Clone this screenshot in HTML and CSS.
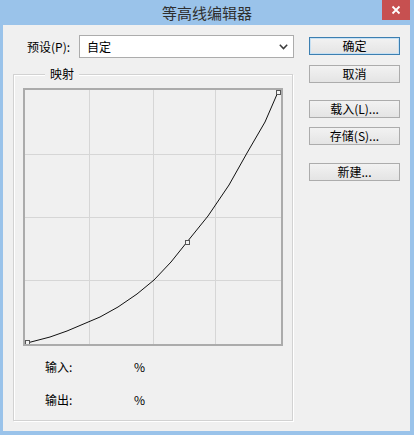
FILE: index.html
```html
<!DOCTYPE html>
<html lang="zh-CN">
<head>
<meta charset="utf-8">
<title>等高线编辑器</title>
<link rel="stylesheet" href="styles.css">
</head>
<body>
<div class="window">
  <div class="titlebar">
    <span class="title">等高线编辑器</span>
    <span class="close">
      <svg width="10" height="10" viewBox="0 0 10 10"><path d="M1.5 1.5 L8.5 8.5 M8.5 1.5 L1.5 8.5" stroke="#fff" stroke-width="1.8" fill="none"/></svg>
    </span>
  </div>
  <div class="client">
    <div class="left">
      <div class="preset">
        <span class="preset-label">预设(P):</span>
        <div class="select">
          <span class="select-value">自定</span>
          <svg class="chev" width="9" height="6" viewBox="0 0 9 6"><path d="M0.8 0.8 L4.5 4.6 L8.2 0.8" stroke="#3c3c3c" stroke-width="1.5" fill="none"/></svg>
        </div>
      </div>
      <div class="group">
        <div class="legend-row"><span class="legend">映射</span></div>
        <div class="graph">
          <svg width="256" height="254" viewBox="0 0 256 254">
            <g stroke="#d6d6d6" stroke-width="1">
              <line x1="64.5" y1="0" x2="64.5" y2="254"/>
              <line x1="128.5" y1="0" x2="128.5" y2="254"/>
              <line x1="190.5" y1="0" x2="190.5" y2="254"/>
              <line x1="0" y1="64.5" x2="256" y2="64.5"/>
              <line x1="0" y1="127.5" x2="256" y2="127.5"/>
              <line x1="0" y1="190.5" x2="256" y2="190.5"/>
            </g>
            <polyline fill="none" stroke="#111" stroke-width="1" stroke-linejoin="round"
              points="2,253 25,247 42,241 75,227 93,217 112,204 129,190 146,172 162,152 183,126 204,95 222,63 240,32 253,2"/>
            <g fill="#f4f4f4" stroke="#555" stroke-width="1">
              <rect x="0.5" y="250.5" width="4" height="4"/>
              <rect x="160.5" y="150.5" width="4" height="4"/>
              <rect x="251.5" y="0.5" width="4" height="4"/>
            </g>
          </svg>
        </div>
        <div class="readout">
          <div class="readout-row"><span class="readout-label">输入:</span><span class="readout-unit">%</span></div>
          <div class="readout-row"><span class="readout-label">输出:</span><span class="readout-unit">%</span></div>
        </div>
      </div>
    </div>
    <div class="buttons">
      <button class="btn btn-default">确定</button>
      <button class="btn btn-cancel">取消</button>
      <button class="btn btn-load">载入(L)...</button>
      <button class="btn btn-save">存储(S)...</button>
      <button class="btn btn-new">新建...</button>
    </div>
  </div>
</div>
</body>
</html>
```

FILE: styles.css
```css
html, body {
  margin: 0;
  padding: 0;
}
body {
  width: 414px;
  height: 435px;
  overflow: hidden;
  font-family: "Noto Sans CJK SC", "Noto Sans", sans-serif;
  font-size: 12px;
  color: #000;
  background: #9ac3ea;
}
.window {
  width: 414px;
  height: 435px;
  display: flex;
  flex-direction: column;
  background: #9ac3ea;
}
.titlebar {
  height: 25px;
  display: flex;
  align-items: flex-start;
  flex: none;
}
.title {
  flex: 1;
  text-align: center;
  padding-left: 32px;
  font-size: 15px;
  line-height: 25px;
  color: #2f2f2f;
}
.close {
  width: 28px;
  height: 20px;
  margin-right: 4px;
  background: #c75050;
  display: flex;
  align-items: center;
  justify-content: center;
}
.client {
  flex: 1;
  margin: 0 4px 4px 3px;
  background: #f0f0f0;
  display: flex;
  padding: 10px 0 0 10px;
  box-sizing: border-box;
}
.left {
  width: 280px;
  display: flex;
  flex-direction: column;
}
.preset {
  display: flex;
  align-items: center;
  height: 23px;
}
.preset-label {
  margin-left: 14px;
  width: 51px;
  line-height: 16px;
}
.select {
  width: 215px;
  height: 23px;
  box-sizing: border-box;
  border: 1px solid #acacac;
  background: #fff;
  display: flex;
  align-items: center;
  justify-content: space-between;
  padding: 0 5px 0 7px;
  margin-left: auto;
  margin-right: -1px;
}
.select-value {
  line-height: 16px;
}
.group {
  margin-top: 16px;
  padding: 0 9px;
  width: 280px;
  height: 347px;
  box-sizing: border-box;
  border: 1px solid #d2d2d2;
  box-shadow: inset 1px 1px 0 #fff, 1px 1px 0 #fff;
}
.legend-row {
  height: 8px;
  display: flex;
  padding-left: 22px;
}
.legend {
  margin-top: -9px;
  padding: 0 5px;
  height: 16px;
  line-height: 16px;
  background: #f0f0f0;
}
.graph {
  margin-top: 5px;
  width: 260px;
  height: 258px;
  box-sizing: border-box;
  border: 2px solid #ababab;
  background: #f0f0f0;
}
.graph svg {
  display: block;
}
.readout {
  padding-left: 22px;
  margin-top: 13px;
  display: flex;
  flex-direction: column;
  gap: 17px;
}
.readout-row {
  display: flex;
  line-height: 16px;
}
.readout-label {
  width: 89px;
}
.buttons {
  width: 91px;
  margin-left: 16px;
  margin-top: 2px;
  display: flex;
  flex-direction: column;
}
.btn {
  width: 91px;
  height: 18px;
  box-sizing: border-box;
  border: 1px solid #acacac;
  background: linear-gradient(#f2f2f2, #e4e4e4);
  font-family: "Noto Sans CJK SC", "Noto Sans", sans-serif;
  font-size: 12px;
  line-height: 14px;
  color: #000;
  padding: 0;
  margin: 0;
}
.btn-default {
  border-color: #3c7fb1;
  box-shadow: inset 0 0 0 1px #c6e0f3;
}
.btn-cancel { margin-top: 10px; }
.btn-load { margin-top: 17px; }
.btn-save { margin-top: 9px; }
.btn-new { margin-top: 18px; }
```
